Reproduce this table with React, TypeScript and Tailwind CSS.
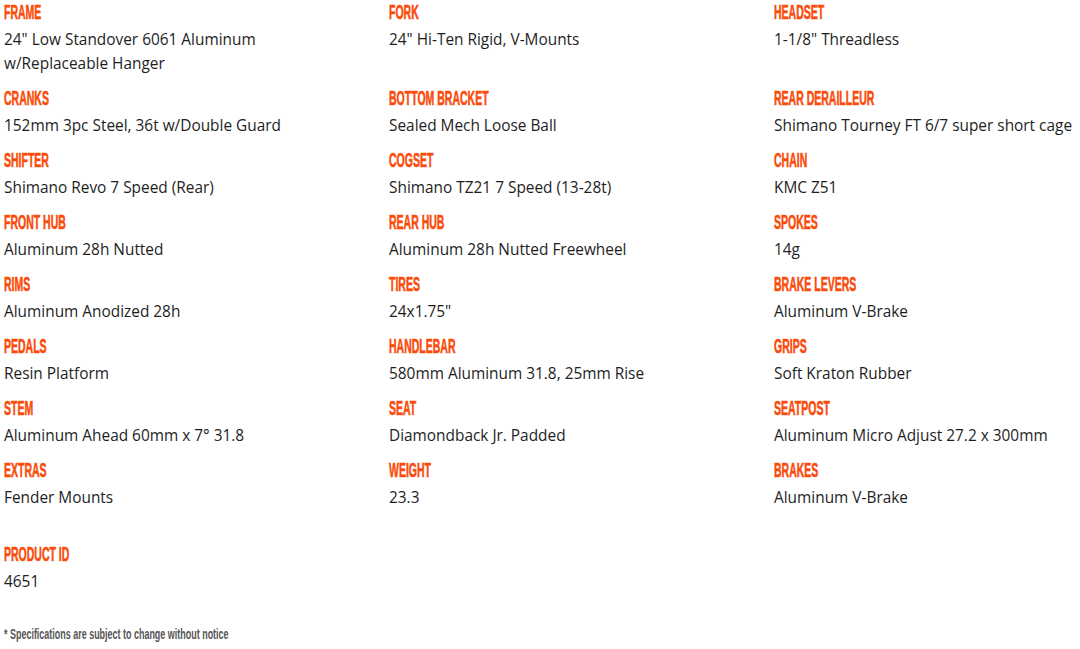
import React from 'react';

type Spec = { label: string; value: string[] };

const specs: Spec[] = [
  { label: 'Frame', value: ['24" Low Standover 6061 Aluminum', 'w/Replaceable Hanger'] },
  { label: 'Fork', value: ['24" Hi-Ten Rigid, V-Mounts'] },
  { label: 'Headset', value: ['1-1/8" Threadless'] },
  { label: 'Cranks', value: ['152mm 3pc Steel, 36t w/Double Guard'] },
  { label: 'Bottom Bracket', value: ['Sealed Mech Loose Ball'] },
  { label: 'Rear Derailleur', value: ['Shimano Tourney FT 6/7 super short cage'] },
  { label: 'Shifter', value: ['Shimano Revo 7 Speed (Rear)'] },
  { label: 'Cogset', value: ['Shimano TZ21 7 Speed (13-28t)'] },
  { label: 'Chain', value: ['KMC Z51'] },
  { label: 'Front Hub', value: ['Aluminum 28h Nutted'] },
  { label: 'Rear Hub', value: ['Aluminum 28h Nutted Freewheel'] },
  { label: 'Spokes', value: ['14g'] },
  { label: 'Rims', value: ['Aluminum Anodized 28h'] },
  { label: 'Tires', value: ['24x1.75"'] },
  { label: 'Brake Levers', value: ['Aluminum V-Brake'] },
  { label: 'Pedals', value: ['Resin Platform'] },
  { label: 'Handlebar', value: ['580mm Aluminum 31.8, 25mm Rise'] },
  { label: 'Grips', value: ['Soft Kraton Rubber'] },
  { label: 'Stem', value: ['Aluminum Ahead 60mm x 7° 31.8'] },
  { label: 'Seat', value: ['Diamondback Jr. Padded'] },
  { label: 'Seatpost', value: ['Aluminum Micro Adjust 27.2 x 300mm'] },
  { label: 'Extras', value: ['Fender Mounts'] },
  { label: 'Weight', value: ['23.3'] },
  { label: 'Brakes', value: ['Aluminum V-Brake'] },
];

const SpecLabel: React.FC<{ children: React.ReactNode }> = ({ children }) => (
  <div className="h-[28px]">
    <span className="inline-block origin-left scale-x-[0.5] text-[21px] leading-[24px] font-bold uppercase text-[#fa4b0a] [-webkit-text-stroke:0.6px_#fa4b0a] font-['Liberation_Sans_Narrow','Liberation_Sans',sans-serif] whitespace-nowrap">
      {children}
    </span>
  </div>
);

const App: React.FC = () => {
  return (
    <div className="min-h-screen bg-white pl-[4px] font-['Open_Sans','Lato',sans-serif] text-[15.4px] leading-[24px] text-[#1e1e1e]">
      <div className="grid grid-cols-[385px_385px_1fr]">
        {specs.map((spec) => (
          <div key={spec.label} className="mb-[10px]">
            <SpecLabel>{spec.label}</SpecLabel>
            {spec.value.map((line, i) => (
              <div key={i} className="whitespace-nowrap">{line}</div>
            ))}
          </div>
        ))}
      </div>

      <div className="mt-[22px]">
        <SpecLabel>Product ID</SpecLabel>
        <div>4651</div>
      </div>

      <p className="mt-[32px] origin-left scale-x-[0.64] inline-block text-[14px] leading-[17px] font-bold text-[#555] font-['Liberation_Sans_Narrow','Liberation_Sans',sans-serif] whitespace-nowrap">
        * Specifications are subject to change without notice
      </p>
    </div>
  );
};

export default App;
